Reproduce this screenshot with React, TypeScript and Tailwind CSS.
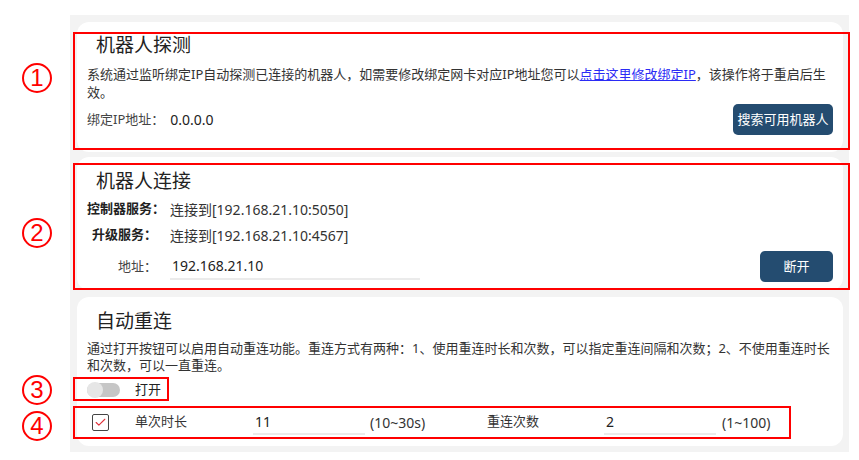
import { Check } from "lucide-react";

// 标注圆圈（红色编号）
function Marker({ n, top }: { n: number; top: string }) {
  return (
    <div
      className={`absolute left-[22px] ${top} flex h-[30px] w-[30px] items-center justify-center rounded-full border-2 border-[#ff0000] font-['Liberation_Sans',sans-serif] text-[24px] leading-none text-[#ff0000]`}
    >
      {n}
    </div>
  );
}

function Underlined({ value, width }: { value: string; width: string }) {
  return (
    <div className={`${width} flex h-[26px] items-center border-b-2 border-[#ebebeb] pl-[2px] text-[14px] text-[#222]`}>
      {value}
    </div>
  );
}

export default function App() {
  return (
    <div className="relative h-[460px] w-[859px] bg-white font-['Noto_Sans','Noto_Sans_CJK_SC',sans-serif] text-[#333]">
      <div className="ml-[70px] flex h-[437px] w-[779px] translate-y-[15px] flex-col gap-[5px] bg-[#f3f3f3] pl-[7px] pr-[6px] pt-[7px]">
        {/* 机器人探测 */}
        <div className="h-[130px] rounded-[12px] bg-white px-[10px] pt-[10px]">
          <div className="ml-[9px] text-[19px] leading-[26px] text-[#222]">机器人探测</div>
          <p className="mt-[7px] whitespace-nowrap text-[13px] leading-[18px]">
            系统通过监听绑定IP自动探测已连接的机器人，如需要修改绑定网卡对应IP地址您可以
            <a className="text-[#2b2bf5] underline">点击这里修改绑定IP</a>，该操作将于重启后生
            <br />
            效。
          </p>
          <div className="mt-[3px] flex h-[31px] items-center justify-between">
            <div className="flex items-center text-[13px]">
              <span className="text-[#444]">绑定IP地址：</span>
              <span className="ml-[6px] text-[14px] text-[#222]">0.0.0.0</span>
            </div>
            <button className="h-[31px] w-[100px] rounded-[5px] bg-[#244c70] text-[13px] text-white">
              搜索可用机器人
            </button>
          </div>
        </div>

        {/* 机器人连接 */}
        <div className="h-[133px] rounded-[12px] bg-white px-[10px] pt-[11px]">
          <div className="ml-[9px] text-[19px] leading-[26px] text-[#222]">机器人连接</div>
          <div className="mt-[5px] flex h-[20px] items-center text-[13px]">
            <span className="w-[70px] whitespace-nowrap text-right font-bold text-[#222]">控制器服务：</span>
            <span className="ml-[13px] text-[14px]">连接到[192.168.21.10:5050]</span>
          </div>
          <div className="mt-[6px] flex h-[20px] items-center text-[13px]">
            <span className="w-[70px] whitespace-nowrap text-right font-bold text-[#222]">升级服务：</span>
            <span className="ml-[13px] text-[14px]">连接到[192.168.21.10:4567]</span>
          </div>
          <div className="mt-[6px] flex h-[31px] items-center justify-between">
            <div className="flex items-center text-[13px]">
              <span className="w-[70px] text-right text-[#444]">地址：</span>
              <div className="ml-[13px]">
                <Underlined value="192.168.21.10" width="w-[250px]" />
              </div>
            </div>
            <button className="h-[31px] w-[73px] rounded-[5px] bg-[#244c70] text-[13px] text-white">断开</button>
          </div>
        </div>

        {/* 自动重连 */}
        <div className="mt-[2px] h-[149px] rounded-[12px] bg-white px-[10px] pt-[11px]">
          <div className="ml-[9px] text-[19px] leading-[26px] text-[#222]">自动重连</div>
          <p className="mt-[6px] whitespace-nowrap text-[13px] leading-[17px]">
            通过打开按钮可以启用自动重连功能。重连方式有两种：1、使用重连时长和次数，可以指定重连间隔和次数；2、不使用重连时长
            <br />
            和次数，可以一直重连。
          </p>
          <div className="mt-[6px] flex h-[20px] items-center text-[13px]">
            <div className="w-[48px]">
              <div className="relative h-[14px] w-[33px] rounded-full bg-[#c6c6c6]">
                <div className="absolute -top-[1px] left-0 h-[16px] w-[16px] rounded-full bg-[#e6e6e6]" />
              </div>
            </div>
            <span className="text-[#222]">打开</span>
          </div>
          <div className="mt-[9px] flex h-[26px] items-center text-[13px]">
            <div className="w-[48px]">
              <div className="ml-[5px] flex h-[17px] w-[17px] items-center justify-center rounded-[2px] border-[1.5px] border-[#444]">
                <Check size={13} strokeWidth={2} className="text-[#e0303a]" />
              </div>
            </div>
            <span className="w-[118px]">单次时长</span>
            <Underlined value="11" width="w-[112px]" />
            <span className="ml-[5px] w-[117px] text-[14px]">(10~30s)</span>
            <span className="w-[117px]">重连次数</span>
            <Underlined value="2" width="w-[112px]" />
            <span className="ml-[6px] text-[14px]">(1~100)</span>
          </div>
        </div>
      </div>

      {/* 红色标注框 */}
      <div className="absolute left-[73px] top-[32px] h-[118px] w-[777px] border-2 border-[#ff0000]" />
      <div className="absolute left-[73px] top-[163px] h-[127px] w-[777px] border-2 border-[#ff0000]" />
      <div className="absolute left-[73px] top-[377px] h-[24px] w-[96px] border-2 border-[#ff0000]" />
      <div className="absolute left-[73px] top-[406px] h-[33px] w-[718px] border-2 border-[#ff0000]" />

      <Marker n={1} top="top-[63px]" />
      <Marker n={2} top="top-[218px]" />
      <Marker n={3} top="top-[375px]" />
      <Marker n={4} top="top-[411px]" />
    </div>
  );
}
